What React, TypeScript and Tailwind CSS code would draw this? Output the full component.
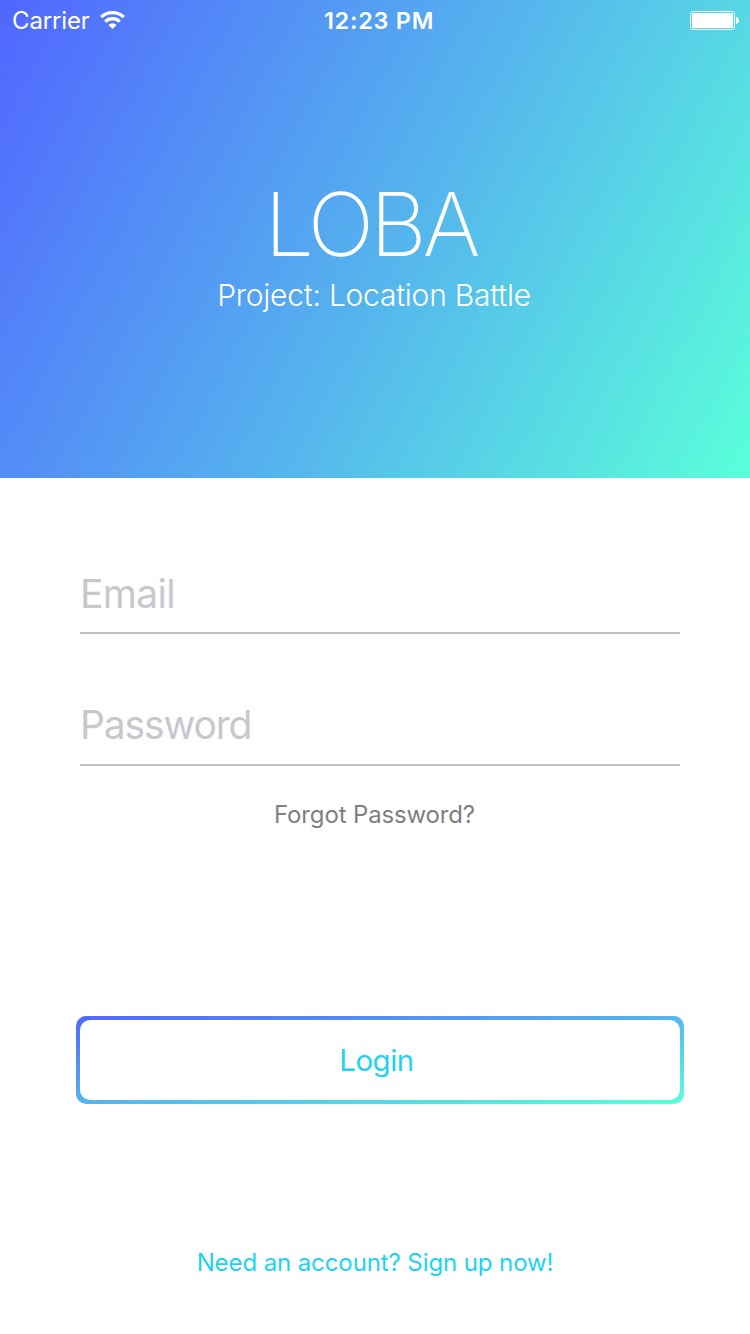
export default function App() {
  return (
    <main className="flex h-[1334px] w-[750px] flex-col bg-white font-['Inter',sans-serif]">
      <header className="flex h-[478px] flex-col bg-[linear-gradient(118deg,#5166ff_0%,#55b5ed_53%,#5affda_100%)] text-white">
        <div className="grid h-[40px] grid-cols-[1fr_auto_1fr] items-center pl-3 pr-[11px]">
          <div className="flex items-center gap-[11px]">
            <span className="w-[77px] whitespace-nowrap pt-[2px] text-[24px] tracking-[-0.15px]">Carrier</span>
            <svg width="25" height="18" viewBox="0 0 25 18" fill="none" stroke="white" strokeWidth="3.2">
              <path d="M1.2 6.2a16.2 16.2 0 0 1 22.6 0" />
              <path d="M5.2 10.6a10.4 10.4 0 0 1 14.6 0" />
              <path d="M12.5 18l-4-4a5.6 5.6 0 0 1 8 0z" fill="white" stroke="none" />
            </svg>
          </div>
          <span className="pl-[7px] pt-[2px] text-center text-[23.500px] font-semibold tracking-[0.7px]">12:23 PM</span>
          <svg className="justify-self-end" width="49" height="19" viewBox="0 0 49 19" fill="none">
            <rect x=".5" y=".5" width="44" height="18" rx="3" stroke="white" />
            <rect x="2" y="2" width="41" height="15" rx="1.5" fill="white" />
            <path d="M46 6q3 1 3 3.500t-3 3.500z" fill="white" />
          </svg>
        </div>
        <div className="flex flex-col items-center pt-[131px]">
          <h1 className="mr-[9px] text-[88px] font-extralight leading-[106px] tracking-[-4px]">LOBA</h1>
          <p className="mr-[2px] text-[30px] font-light leading-[36px] tracking-[-0.25px]">Project: Location Battle</p>
        </div>
      </header>
      <form className="flex flex-col items-center">
        <div className="ml-[10px] mt-[72px] flex h-[84px] w-[600px] items-center border-b-2 border-[#c0c0c2] pt-[7px] text-[39px] tracking-[-0.7px] text-[#c7c7cd]">Email</div>
        <div className="ml-[10px] mt-[48px] flex h-[84px] w-[600px] items-center border-b-2 border-[#c0c0c2] pt-[4px] text-[39px] tracking-[-1.15px] text-[#c7c7cd]">Password</div>
        <a className="mt-[34px] mr-px text-[24px] leading-[30px] tracking-[-0.15px] text-[#7f7f7f]">Forgot Password?</a>
        <button type="button" className="mt-[186px] ml-[10px] h-[88px] w-[608px] rounded-[10px] bg-[linear-gradient(to_bottom_right,#5166ff_0%,#55b5ed_50%,#5affda_100%)] p-1">
          <span className="flex h-full items-center justify-center rounded-[10px] bg-white pr-[7px] pt-[1px] text-[29.500px] tracking-[-0.5px] text-[#1dd3ee]">Login</span>
        </button>
        <a className="mt-[144px] text-[24px] leading-[30px] tracking-[-0.1px] text-[#1dd3ee]">Need an account? Sign up now!</a>
      </form>
    </main>
  );
}
